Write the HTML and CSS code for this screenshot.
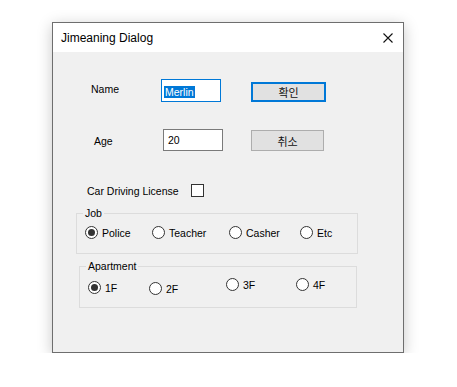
FILE: index.html
```html
<!DOCTYPE html>
<html>
<head>
<meta charset="utf-8">
<link rel="stylesheet" href="styles.css">
</head>
<body>
<div class="page">
  <div class="window">
    <div class="titlebar">
      <span class="title">Jimeaning Dialog</span>
      <svg class="close" width="10" height="10" viewBox="0 0 10 10"><path d="M0.5 0.5 L9.5 9.5 M9.5 0.5 L0.5 9.5" stroke="#111" stroke-width="1.1" fill="none"/></svg>
    </div>
    <div class="content">
      <div class="row row-name">
        <span class="lbl lbl-name">Name</span>
        <div class="field field-focus"><span class="sel">Merlin</span></div>
        <div class="btn btn-default">확인</div>
      </div>
      <div class="row row-age">
        <span class="lbl lbl-age">Age</span>
        <div class="field field-age"><span class="val">20</span></div>
        <div class="btn btn-cancel">취소</div>
      </div>
      <div class="row row-car">
        <span class="lbl lbl-car">Car Driving License</span>
        <span class="check"></span>
      </div>
      <fieldset class="group group-job">
        <legend>Job</legend>
        <div class="radios">
          <label class="radio w-police"><span class="dot on"></span>Police</label>
          <label class="radio w-teacher"><span class="dot"></span>Teacher</label>
          <label class="radio w-casher"><span class="dot"></span>Casher</label>
          <label class="radio"><span class="dot"></span>Etc</label>
        </div>
      </fieldset>
      <fieldset class="group group-apt">
        <legend>Apartment</legend>
        <div class="radios">
          <label class="radio w-1f down3"><span class="dot on"></span>1F</label>
          <label class="radio w-2f down4"><span class="dot"></span>2F</label>
          <label class="radio w-3f"><span class="dot"></span>3F</label>
          <label class="radio"><span class="dot"></span>4F</label>
        </div>
      </fieldset>
    </div>
  </div>
</div>
</body>
</html>
```
FILE: styles.css
```css
* { box-sizing: border-box; }
html, body { margin: 0; padding: 0; background: #fff; }
body { font-family: "Liberation Sans", Arial, sans-serif; color: #000; }
.page { padding: 22px 0 0 52px; }
.window {
  width: 352px;
  height: 331px;
  border: 1px solid #6e6e6e;
  background: #f0f0f0;
  box-shadow: 0 3px 14px rgba(0,0,0,0.22);
  display: flex;
  flex-direction: column;
}
.titlebar {
  height: 29px;
  background: #fff;
  display: flex;
  align-items: center;
  justify-content: space-between;
  padding: 0 10px 0 8px;
  flex: none;
}
.title { font-size: 12px; line-height: 14px; margin-top: 1px; }
.close { display: block; margin-top: 1px; }
.content { flex: 1; font-size: 10.5px; line-height: 14px; }
.row { display: flex; align-items: flex-start; }
.lbl { display: block; }

.row-name { margin-top: 27px; height: 23px; padding-left: 38px; }
.lbl-name { width: 70px; margin-top: 3px; }
.field { background: #fff; border: 1px solid #7a7a7a; }
.field-focus { width: 60px; height: 23px; border-color: #0078d7; padding: 5px 0 0 2px; }
.sel { display: inline-block; background: #0078d7; color: #fff; line-height: 12px; padding: 0 1px 0 1px; }
.btn {
  background: #e1e1e1;
  border: 1px solid #adadad;
  display: flex; align-items: center; justify-content: center;
  font-family: "Noto Sans CJK KR", sans-serif;
  font-size: 11px;
  color: #111;
}
.btn-default { width: 75px; height: 20px; margin: 3px 0 0 30px; border: 2px solid #0078d7; }

.row-age { margin-top: 27px; height: 22px; padding-left: 41px; }
.lbl-age { width: 69px; margin-top: 5px; }
.field-age { width: 60px; height: 22px; padding: 3px 0 0 4px; }
.btn-cancel { width: 73px; height: 21px; margin: 1px 0 0 28px; }

.row-car { margin-top: 33px; height: 13px; padding-left: 34px; }
.lbl-car { width: 104px; margin-top: 0px; }
.check { display: block; width: 13px; height: 13px; border: 1px solid #333; background: #fff; }

.group {
  margin: 9px 0 0 23px;
  padding: 0;
  border: 1px solid #dcdcdc;
  min-width: 0;
}
.group legend { margin-left: 6px; padding: 0 2px; line-height: 14px; }
.group-job { width: 282px; height: 48px; }
.group-apt { width: 278px; height: 49px; margin: 5px 0 0 26px; }
.radios { display: flex; align-items: flex-start; }
.group-job .radios { margin: 6px 0 0 8px; }
.group-apt .radios { margin: 5px 0 0 8px; }
.radio { display: flex; align-items: center; height: 13px; }
.dot {
  width: 13px; height: 13px; border-radius: 50%;
  border: 1px solid #333; background: #fff;
  margin-right: 4px; flex: none;
  display: flex; align-items: center; justify-content: center;
}
.dot.on::after { content: ""; width: 7px; height: 7px; border-radius: 50%; background: #333; }
.w-police { width: 67px; }
.w-teacher { width: 77px; }
.w-casher { width: 71px; }
.w-1f { width: 61px; }
.w-2f { width: 77px; }
.w-3f { width: 70px; }
.down3 { margin-top: 3px; }
.down4 { margin-top: 4px; }
```
